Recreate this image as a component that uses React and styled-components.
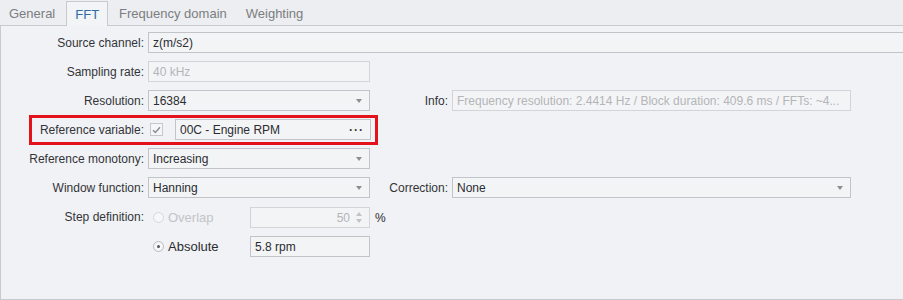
import React from "react";
import styled, { createGlobalStyle } from "styled-components";

const GlobalStyle = createGlobalStyle`
  body {
    margin: 0;
    background: #eceef1;
    font-family: "Liberation Sans", Arial, sans-serif;
  }
`;

const tabs = ["General", "FFT", "Frequency domain", "Weighting"];

const Page = styled.div`
  width: 903px;
  height: 300px;
  overflow: hidden;
  background: #eceef1;
`;

const TabStrip = styled.div`
  display: flex;
  height: 25px;
  padding-left: 1px;
  gap: 3px;
  align-items: flex-end;
`;

const Tab = styled.div`
  height: ${(p) => (p.$active ? "25px" : "24px")};
  box-sizing: border-box;
  padding: 0 ${(p) => (p.$active ? "8px" : "7px")};
  display: flex;
  align-items: center;
  font-size: 13px;
  color: ${(p) => (p.$active ? "#2d6ca8" : "#7c7d80")};
  background: ${(p) => (p.$active ? "#f3f4f6" : "transparent")};
  border: 1px solid ${(p) => (p.$active ? "#c9cacd" : "transparent")};
  border-bottom: none;
  margin-bottom: ${(p) => (p.$active ? "-1px" : "0")};
  position: relative;
  z-index: 1;
`;

const Panel = styled.div`
  width: 920px;
  height: 275px;
  box-sizing: border-box;
  border: 1px solid #c9cacd;
  background: #f1f2f5;
  padding-top: 6px;
  display: flex;
  flex-direction: column;
  gap: 8px;
`;

const Row = styled.div`
  display: flex;
  align-items: center;
  height: 21px;
  position: relative;

  ${(p) =>
    p.$highlight &&
    `
    &::after {
      content: "";
      position: absolute;
      left: 28px;
      top: -4px;
      width: 343px;
      height: 24px;
      border: 3px solid #e3121b;
      pointer-events: none;
    }
  `}
`;

const Label = styled.label`
  width: ${(p) => p.$width || 143}px;
  flex-shrink: 0;
  text-align: right;
  font-size: 12px;
  color: #333438;
  padding-right: 4px;
  box-sizing: content-box;
  white-space: nowrap;
`;

const Field = styled.div`
  height: 21px;
  width: ${(p) => (p.$width ? `${p.$width}px` : "auto")};
  flex: ${(p) => (p.$width ? "0 0 auto" : "1")};
  box-sizing: border-box;
  border: 1px solid ${(p) => (p.$disabled ? "#d3d4d7" : "#c3c4c7")};
  background: #f3f4f6;
  display: flex;
  align-items: center;
  padding: 0 4px 0 4px;
  font-size: 12px;
  color: ${(p) => (p.$disabled ? "#b4b5b8" : "#2b2c30")};
  white-space: nowrap;
  overflow: hidden;
`;

const FieldText = styled.span`
  flex: 1;
  overflow: hidden;
  text-align: ${(p) => (p.$right ? "right" : "left")};
`;

const Arrow = styled.span`
  width: 0;
  height: 0;
  border-left: 3.5px solid transparent;
  border-right: 3.5px solid transparent;
  border-top: 4px solid #8d8e91;
  margin: 0 3px 0 6px;
`;

const Dots = styled.span`
  font-size: 12px;
  letter-spacing: 1px;
  color: #3a3b3f;
  margin-right: 2px;
  font-weight: bold;
`;

const Spin = styled.div`
  display: flex;
  flex-direction: column;
  gap: 3px;
  margin: 0 3px 0 6px;
`;

const SpinArrow = styled.span`
  width: 0;
  height: 0;
  border-left: 3px solid transparent;
  border-right: 3px solid transparent;
  ${(p) => (p.$up ? "border-bottom" : "border-top")}: 4px solid #c3c4c7;
`;

const Check = styled.span`
  width: 11px;
  height: 11px;
  border: 1px solid #c6c7ca;
  background: #f5f6f8;
  margin: 0 12px 0 2px;
  display: flex;
  align-items: center;
  justify-content: center;
`;

const Unit = styled.span`
  font-size: 12px;
  color: #2b2c30;
  margin-left: 5px;
`;

const StepBlock = styled.div`
  display: flex;
`;

const StepRows = styled.div`
  display: flex;
  flex-direction: column;
  gap: 6px;
`;

const StepRow = styled.div`
  display: flex;
  align-items: center;
  height: 23px;
`;

const StepLabel = styled(Label)`
  padding-top: 4px;
`;

const Radio = styled.label`
  width: 102px;
  display: flex;
  align-items: center;
  gap: 4px;
  padding-left: 5px;
  box-sizing: border-box;
  font-size: 13px;
  color: ${(p) => (p.$disabled ? "#c3c4c7" : "#2b2c30")};
`;

const RadioDot = styled.span`
  width: 11px;
  height: 11px;
  border-radius: 50%;
  box-sizing: border-box;
  border: 1px solid ${(p) => (p.$disabled ? "#d6d7da" : "#b9babd")};
  background: #f6f7f9;
  display: flex;
  align-items: center;
  justify-content: center;

  &::after {
    content: "";
    width: 3px;
    height: 3px;
    border-radius: 50%;
    background: ${(p) => (p.$checked ? "#55565a" : "transparent")};
  }
`;

const Dropdown = ({ value, width }) => (
  <Field $width={width}>
    <FieldText>{value}</FieldText>
    <Arrow />
  </Field>
);

export default function App() {
  return (
    <Page>
      <GlobalStyle />
      <TabStrip>
        {tabs.map((t) => (
          <Tab key={t} $active={t === "FFT"}>
            {t}
          </Tab>
        ))}
      </TabStrip>
      <Panel>
        <Row>
          <Label>Source channel:</Label>
          <Field>
            <FieldText>z(m/s2)</FieldText>
          </Field>
        </Row>
        <Row>
          <Label>Sampling rate:</Label>
          <Field $width={222} $disabled>
            <FieldText>40 kHz</FieldText>
          </Field>
        </Row>
        <Row>
          <Label>Resolution:</Label>
          <Dropdown value="16384" width={222} />
          <Label $width={78}>Info:</Label>
          <Field $width={399} $disabled>
            <FieldText>
              Frequency resolution: 2.4414 Hz / Block duration: 409.6 ms /
              FFTs: ~4...
            </FieldText>
          </Field>
        </Row>
        <Row $highlight>
          <Label>Reference variable:</Label>
          <Check>
            <svg width="9" height="8" viewBox="0 0 9 8">
              <path
                d="M1 4.2 L3.4 6.5 L8 1.2"
                fill="none"
                stroke="#8a8b8e"
                strokeWidth="1.4"
              />
            </svg>
          </Check>
          <Field $width={196}>
            <FieldText>00C - Engine RPM</FieldText>
            <Dots>···</Dots>
          </Field>
        </Row>
        <Row>
          <Label>Reference monotony:</Label>
          <Dropdown value="Increasing" width={222} />
        </Row>
        <Row>
          <Label>Window function:</Label>
          <Dropdown value="Hanning" width={222} />
          <Label $width={78}>Correction:</Label>
          <Dropdown value="None" width={399} />
        </Row>
        <StepBlock>
          <StepLabel>Step definition:</StepLabel>
          <StepRows>
            <StepRow>
              <Radio $disabled>
                <RadioDot $disabled />
                Overlap
              </Radio>
              <Field $width={120} $disabled>
                <FieldText $right>50</FieldText>
                <Spin>
                  <SpinArrow $up />
                  <SpinArrow />
                </Spin>
              </Field>
              <Unit>%</Unit>
            </StepRow>
            <StepRow>
              <Radio>
                <RadioDot $checked />
                Absolute
              </Radio>
              <Field $width={120}>
                <FieldText>5.8 rpm</FieldText>
              </Field>
            </StepRow>
          </StepRows>
        </StepBlock>
      </Panel>
    </Page>
  );
}
